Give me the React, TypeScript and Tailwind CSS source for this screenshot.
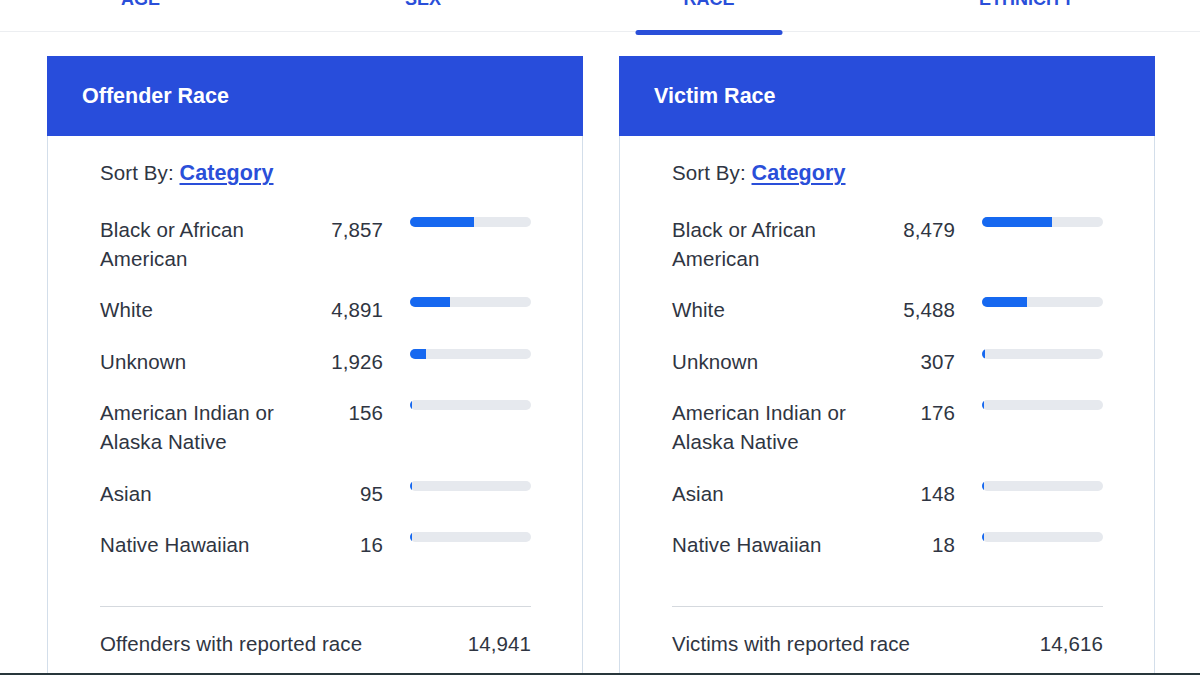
import React from "react";

type Row = { label: string; value: number };

const tabs = ["Age", "Sex", "Race", "Ethnicity"];

const offenderRows: Row[] = [
  { label: "Black or African American", value: 7857 },
  { label: "White", value: 4891 },
  { label: "Unknown", value: 1926 },
  { label: "American Indian or Alaska Native", value: 156 },
  { label: "Asian", value: 95 },
  { label: "Native Hawaiian", value: 16 },
];

const victimRows: Row[] = [
  { label: "Black or African American", value: 8479 },
  { label: "White", value: 5488 },
  { label: "Unknown", value: 307 },
  { label: "American Indian or Alaska Native", value: 176 },
  { label: "Asian", value: 148 },
  { label: "Native Hawaiian", value: 18 },
];

function RaceCard({
  title,
  rows,
  totalLabel,
  total,
}: {
  title: string;
  rows: Row[];
  totalLabel: string;
  total: number;
}) {
  return (
    <section className="flex flex-col min-h-0">
      <header className="h-[80px] shrink-0 bg-[#284ddb] flex items-center pl-[35px] pt-[2px]">
        <h2 className="text-white font-bold text-[21.5px] leading-none">{title}</h2>
      </header>

      <div className="flex-1 border-x border-[#d3deea] pl-[52px] pr-[51px] pt-[22px] text-[#2f3542] text-[20.5px] leading-[29px] tracking-[0.1px]">
        <p className="h-[29px]">
          Sort By:{" "}
          <a href="#" className="text-[#2a4fd9] text-[21.5px] font-bold underline underline-offset-[3px] decoration-[1.5px]">
            Category
          </a>
        </p>

        {/* Rows */}
        <ul className="mt-[27.5px] flex flex-col gap-[22.5px]">
          {rows.map((row) => (
            <li key={row.label} className="flex items-start">
              <span className="w-[190px] shrink-0">{row.label}</span>
              <span className="w-[93px] shrink-0 text-right">{row.value.toLocaleString("en-US")}</span>
              <div className="ml-[27px] flex-1 mt-[2px] h-[10px] rounded-full bg-[#e6e9ee] overflow-hidden">
                <div
                  className="h-full bg-[#1668f0]"
                  style={{ width: `max(${(row.value / total) * 100}%, 2px)` }}
                />
              </div>
            </li>
          ))}
        </ul>

        <div className="mt-[47px] border-t border-[#d5d9de] pt-[21.5px] flex justify-between">
          <span>{totalLabel}</span>
          <span>{total.toLocaleString("en-US")}</span>
        </div>
      </div>
    </section>
  );
}

export default function App() {
  return (
    <div className="h-[675px] flex flex-col overflow-hidden bg-white font-[family-name:'Liberation_Sans',Arial,sans-serif]">
      {/* Tab bar */}
      <nav className="h-[32px] shrink-0 border-b border-[#eceef1] grid grid-cols-[281px_284px_288px_1fr]">
        {tabs.map((tab) => (
          <div key={tab} className="relative flex justify-center">
            <span className="-mt-[10px] text-[18px] leading-[18px] font-bold uppercase text-[#2a4fd9]">
              {tab}
            </span>
            {tab === "Race" && (
              <span className="absolute bottom-[-4px] left-1/2 -translate-x-1/2 w-[147px] h-[5px] rounded-full bg-[#2a4fd9]" />
            )}
          </div>
        ))}
      </nav>

      <main className="flex-1 min-h-0 overflow-hidden pl-[47px] pr-[45px] pt-[24px] grid grid-cols-2 gap-[36px]">
        <RaceCard
          title="Offender Race"
          rows={offenderRows}
          totalLabel="Offenders with reported race"
          total={14941}
        />
        <RaceCard
          title="Victim Race"
          rows={victimRows}
          totalLabel="Victims with reported race"
          total={14616}
        />
      </main>

      <div className="h-[2px] shrink-0 bg-[#28363b]" />
    </div>
  );
}
